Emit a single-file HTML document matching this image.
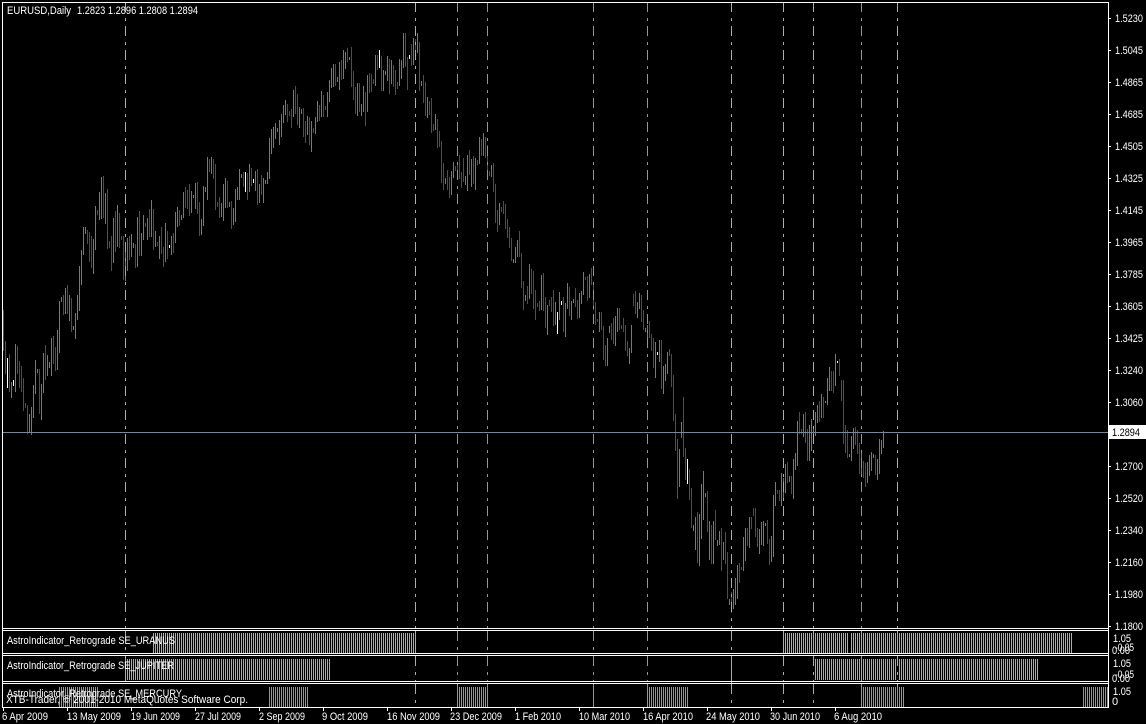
<!DOCTYPE html>
<html><head><meta charset="utf-8"><title>EURUSD,Daily</title>
<style>html,body{margin:0;padding:0;background:#000}svg{display:block}text{font-family:"Liberation Sans",sans-serif;font-size:11px;fill:#fff}</style>
</head><body>
<svg width="1146" height="724" viewBox="0 0 1146 724" xmlns="http://www.w3.org/2000/svg">
<rect width="1146" height="724" fill="#000"/>
<g shape-rendering="crispEdges" fill="none" transform="translate(.5 0)">
<path stroke="#DD1111" d="M3 310V351M5 341V374M9 354V392M17 346V374M19 361V388M21 366V392M23 378V411M25 403V408M27 405V434M39 369V414M45 345V380M53 336V364M55 347V371M63 295V315M67 285V314M71 298V332M87 230V244M89 232V262M91 236V268M97 210V215M103 176V218M107 189V249M109 241V248M111 236V271M115 211V252M119 213V248M121 236V240M123 236V280M129 236V260M135 244V268M139 211V256M145 223V227M149 209V237M153 209V250M157 242V246M161 227V254M163 247V267M167 231V259M173 233V253M179 210V226M185 187V208M187 190V209M189 184V216M197 182V214M199 202V236M209 159V172M213 159V179M215 164V210M217 202V207M219 197V218M227 181V208M231 201V229M243 172V187M247 173V200M251 168V186M257 169V205M261 175V195M287 104V122M289 111V116M291 109V128M295 86V114M297 94V125M303 108V137M305 121V143M309 117V145M313 128V133M319 105V121M323 95V117M325 106V110M335 64V86M341 60V80M347 48V62M351 47V87M353 71V100M355 87V114M359 83V112M365 92V126M369 73V93M371 74V92M373 79V84M377 55V70M381 56V91M389 59V94M393 65V87M395 70V95M397 82V89M405 33V67M407 57V90M411 44V66M415 39V60M419 42V91M423 75V103M425 82V116M429 101V115M431 98V133M433 124V131M437 119V148M439 131V147M441 141V183M443 163V190M447 170V190M449 177V198M455 166V171M457 163V180M459 155V179M461 172V188M463 158V182M469 150V175M473 156V184M477 160V165M481 139V156M485 137V158M487 145V177M489 171V176M493 163V192M495 184V223M497 210V232M501 207V212M503 201V214M505 204V229M507 219V238M509 227V248M511 238V261M519 231V257M521 253V288M523 281V310M527 286V304M531 269V294M533 271V309M535 290V320M537 303V307M539 301V311M543 273V311M545 297V328M549 300V306M551 297V312M553 290V326M563 297V332M569 287V316M575 288V307M577 300V319M585 277V280M587 276V301M591 268V285M593 282V310M595 302V325M597 319V322M601 312V330M603 326V360M605 345V366M611 323V340M613 318V344M619 308V330M621 325V329M623 318V332M625 325V351M627 341V356M633 294V306M635 291V314M641 295V322M643 310V330M649 321V338M651 334V351M653 338V368M661 340V389M669 349V356M671 354V387M673 375V421M675 414V451M677 439V499M683 397V457M685 448V480M689 469V500M691 488V528M697 512V563M707 491V532M711 525V564M715 510V540M721 528V571M725 532V564M727 552V599M731 592V613M739 563V583M741 567V570M747 528V546M751 517V529M753 508V516M755 508V537M757 528V547M767 520V544M769 539V565M777 490V494M779 490V501M787 462V483M791 476V494M799 412V434M801 429V434M805 412V443M807 429V461M819 401V422M823 397V418M831 371V391M833 371V393M839 359V376M841 380V401M843 380V444M845 425V453M847 430V458M855 427V445M857 430V454M859 443V474M863 461V478M865 463V487M875 455V475"/>
<path stroke="#3388DD" d="M11 382V398M15 344V392M29 414V432M31 407V435M33 385V418M35 360V394M37 369V373M41 384V420M43 353V393M47 355V376M49 362V368M51 338V376M57 330V370M59 301V353M61 297V302M65 288V314M69 295V321M73 326V330M75 313V339M77 295V320M79 266V311M81 250V285M83 227V255M85 227V234M93 239V274M95 206V250M99 192V220M101 177V219M105 193V224M113 218V263M117 205V247M125 243V281M127 238V271M131 234V257M133 243V248M137 217V267M141 233V256M143 215V240M147 218V240M151 200V237M155 231V247M159 236V259M165 223V262M171 236V255M175 212V243M177 207V227M181 215V220M183 192V218M191 191V213M193 195V198M195 183V209M201 219V235M203 186V226M205 187V192M207 157V200M211 157V174M221 203V217M223 184V221M225 178V208M229 202V207M233 208V225M235 189V222M237 187V200M239 169V200M241 174V178M249 164V192M255 171V191M259 184V203M263 178V203M265 180V184M267 172V184M269 138V179M271 129V154M273 127V148M275 123V139M277 128V132M279 120V145M281 114V137M283 105V123M285 100V115M293 90V117M299 107V128M301 109V114M307 116V135M311 121V152M315 117V134M317 101V122M321 91V117M327 92V117M329 80V102M331 68V88M333 64V87M337 77V82M339 62V90M343 50V79M345 52V69M349 57V60M357 83V116M361 104V116M363 86V112M367 75V112M375 55V86M383 70V91M385 71V75M387 56V81M391 60V84M399 59V86M401 60V79M403 33V68M413 38V65M417 33V53M421 81V86M427 97V118M435 114V130M445 178V184M451 171V195M453 162V178M465 176V185M467 155V191M471 159V187M475 158V190M479 137V164M483 133V156M491 165V177M499 203V225M513 259V263M515 247V263M517 240V257M525 295V301M529 264V299M541 275V310M547 305V335M555 302V325M559 292V320M565 303V337M567 283V309M571 301V320M573 299V303M579 293V318M581 291V304M583 272V295M589 274V298M599 312V332M607 338V366M609 326V333M615 316V346M617 308V332M629 348V364M631 325V353M637 302V318M639 293V309M645 328V332M647 325V348M655 342V378M659 340V362M663 366V394M665 364V381M667 352V374M679 449V487M681 422V438M693 525V531M695 517V550M699 514V566M701 484V539M703 471V520M705 493V497M709 521V560M713 521V564M717 540V546M719 531V545M723 542V560M729 599V605M733 589V609M735 578V605M737 565V599M743 537V571M745 528V561M749 517V548M759 529V554M761 522V545M763 521V546M765 523V526M771 536V562M773 495V557M775 482V506M781 473V506M783 478V500M785 464V493M789 476V482M793 459V499M795 453V470M797 421V466M803 414V437M809 425V461M811 419V451M813 426V444M815 412V436M817 405V423M821 394V418M825 401V403M827 378V405M829 367V391M835 354V386M849 454V457M851 436V461M853 428V449M861 452V477M867 462V483M869 455V476M871 452V471M873 454V458M877 459V480M879 439V474M881 440V454M883 431V448"/>
<path stroke="#FFFFFF" d="M7 358V388M13 380V386M169 245V248M245 172V192M253 179V183M379 50V68M409 55V59M557 312V334M561 301V305M657 352V355M687 459V484M837 361V363"/>
<path stroke="#FFA500" stroke-dasharray="10 6 3 5" d="M415 2V628M415 631V653M415 656V681M415 684V707M783 2V628M783 631V653M783 656V681M783 684V707"/>
<path stroke="#66CDAA" stroke-dasharray="10 6 3 5" d="M125 2V628M125 631V653M731 2V628M731 631V653M731 684V707M813 2V628M813 631V653M813 656V681M813 684V707M897 2V628M897 631V653M897 656V681M897 684V707"/>
<path stroke="#22E622" stroke-dasharray="10 6 3 5" d="M457 2V628M457 631V653M457 656V681M487 2V628M487 631V653M487 656V681M593 2V628M593 631V653M593 656V681M647 2V628M647 631V653M647 656V681M861 2V628M861 631V653M861 656V681"/>
<path stroke="#22E622" d="M457 684V707M487 684V707M593 684V707M647 684V707M861 684V707"/>
<path stroke="#66CDAA" d="M125 656V681M731 656V683"/>
</g>
<g shape-rendering="crispEdges" fill="none">
<path stroke="#FFA500" stroke-width="20" stroke-dasharray="1 1" d="M153 643H416M783 643H848M851 643H1072"/>
<path stroke="#66CDAA" stroke-width="21" stroke-dasharray="1 1" d="M127 669.5H331M815 669.5H896M899 669.5H1039"/>
<path stroke="#22E622" stroke-width="20" stroke-dasharray="1 1" d="M59 697H98M269 697H308M459 697H487M649 697H688M861 697H904M1083 697H1108"/>
<path stroke="#778899" d="M3 432.5H1108"/>
<path stroke="#fff" d="M2.5 2V708M2 2.5H1109M1108.5 2V708M2 628.5H1109M2 630.5H1109M2 653.5H1109M2 655.5H1109M2 681.5H1109M2 683.5H1109M2 707.5H1109"/>
<path stroke="#fff" d="M1109 18.5H1111M1109 50.5H1111M1109 82.5H1111M1109 114.5H1111M1109 146.5H1111M1109 178.5H1111M1109 210.5H1111M1109 242.5H1111M1109 274.5H1111M1109 306.5H1111M1109 338.5H1111M1109 370.5H1111M1109 402.5H1111M1109 466.5H1111M1109 498.5H1111M1109 530.5H1111M1109 562.5H1111M1109 594.5H1111M1109 626.5H1111"/>
<path stroke="#fff" d="M3.5 708V711M67.5 708V711M131.5 708V711M195.5 708V711M259.5 708V711M323.5 708V711M387.5 708V711M451.5 708V711M515.5 708V711M579.5 708V711M643.5 708V711M707.5 708V711M771.5 708V711M835.5 708V711"/>
<rect x="1109" y="425" width="37" height="14" fill="#fff"/>
</g>
<text x="7" y="14" textLength="64" lengthAdjust="spacingAndGlyphs">EURUSD,Daily</text>
<text x="77" y="14" textLength="121" lengthAdjust="spacingAndGlyphs">1.2823 1.2896 1.2808 1.2894</text>
<g>
<text x="1115" y="22" textLength="28" lengthAdjust="spacingAndGlyphs">1.5230</text>
<text x="1115" y="54" textLength="28" lengthAdjust="spacingAndGlyphs">1.5045</text>
<text x="1115" y="86" textLength="28" lengthAdjust="spacingAndGlyphs">1.4865</text>
<text x="1115" y="118" textLength="28" lengthAdjust="spacingAndGlyphs">1.4685</text>
<text x="1115" y="150" textLength="28" lengthAdjust="spacingAndGlyphs">1.4505</text>
<text x="1115" y="182" textLength="28" lengthAdjust="spacingAndGlyphs">1.4325</text>
<text x="1115" y="214" textLength="28" lengthAdjust="spacingAndGlyphs">1.4145</text>
<text x="1115" y="246" textLength="28" lengthAdjust="spacingAndGlyphs">1.3965</text>
<text x="1115" y="278" textLength="28" lengthAdjust="spacingAndGlyphs">1.3785</text>
<text x="1115" y="310" textLength="28" lengthAdjust="spacingAndGlyphs">1.3605</text>
<text x="1115" y="342" textLength="28" lengthAdjust="spacingAndGlyphs">1.3425</text>
<text x="1115" y="374" textLength="28" lengthAdjust="spacingAndGlyphs">1.3240</text>
<text x="1115" y="406" textLength="28" lengthAdjust="spacingAndGlyphs">1.3060</text>
<text x="1112" y="436" textLength="28" lengthAdjust="spacingAndGlyphs" style="fill:#000">1.2894</text>
<text x="1115" y="470" textLength="28" lengthAdjust="spacingAndGlyphs">1.2700</text>
<text x="1115" y="502" textLength="28" lengthAdjust="spacingAndGlyphs">1.2520</text>
<text x="1115" y="534" textLength="28" lengthAdjust="spacingAndGlyphs">1.2340</text>
<text x="1115" y="566" textLength="28" lengthAdjust="spacingAndGlyphs">1.2160</text>
<text x="1115" y="598" textLength="28" lengthAdjust="spacingAndGlyphs">1.1980</text>
<text x="1115" y="630" textLength="28" lengthAdjust="spacingAndGlyphs">1.1800</text>
</g>
<text x="1113" y="642" textLength="18" lengthAdjust="spacingAndGlyphs">1.05</text>
<text x="1115" y="651" textLength="19" lengthAdjust="spacingAndGlyphs">-0.05</text>
<text x="1112" y="654" textLength="18" lengthAdjust="spacingAndGlyphs">0.00</text>
<text x="1113" y="667" textLength="18" lengthAdjust="spacingAndGlyphs">1.05</text>
<text x="1115" y="678" textLength="19" lengthAdjust="spacingAndGlyphs">-0.05</text>
<text x="1112" y="682" textLength="18" lengthAdjust="spacingAndGlyphs">0.00</text>
<text x="1113" y="695" textLength="18" lengthAdjust="spacingAndGlyphs">1.05</text>
<text x="1112" y="705">0</text>
<text x="7" y="644" textLength="168" lengthAdjust="spacingAndGlyphs">AstroIndicator_Retrograde SE_URANUS</text>
<text x="7" y="669" textLength="167" lengthAdjust="spacingAndGlyphs">AstroIndicator_Retrograde SE_JUPITER</text>
<text x="7" y="697" textLength="175" lengthAdjust="spacingAndGlyphs">AstroIndicator_Retrograde SE_MERCURY</text>
<text x="6" y="703" textLength="242" lengthAdjust="spacingAndGlyphs">XTB-Trader, © 2001-2010 MetaQuotes Software Corp.</text>
<g>
<text x="2" y="720" textLength="46" lengthAdjust="spacingAndGlyphs">6 Apr 2009</text>
<text x="67" y="720" textLength="54" lengthAdjust="spacingAndGlyphs">13 May 2009</text>
<text x="131" y="720" textLength="49" lengthAdjust="spacingAndGlyphs">19 Jun 2009</text>
<text x="195" y="720" textLength="46" lengthAdjust="spacingAndGlyphs">27 Jul 2009</text>
<text x="259" y="720" textLength="46" lengthAdjust="spacingAndGlyphs">2 Sep 2009</text>
<text x="322" y="720" textLength="46" lengthAdjust="spacingAndGlyphs">9 Oct 2009</text>
<text x="387" y="720" textLength="53" lengthAdjust="spacingAndGlyphs">16 Nov 2009</text>
<text x="450" y="720" textLength="52" lengthAdjust="spacingAndGlyphs">23 Dec 2009</text>
<text x="515" y="720" textLength="46" lengthAdjust="spacingAndGlyphs">1 Feb 2010</text>
<text x="579" y="720" textLength="51" lengthAdjust="spacingAndGlyphs">10 Mar 2010</text>
<text x="643" y="720" textLength="50" lengthAdjust="spacingAndGlyphs">16 Apr 2010</text>
<text x="706" y="720" textLength="54" lengthAdjust="spacingAndGlyphs">24 May 2010</text>
<text x="770" y="720" textLength="50" lengthAdjust="spacingAndGlyphs">30 Jun 2010</text>
<text x="834" y="720" textLength="48" lengthAdjust="spacingAndGlyphs">6 Aug 2010</text>
</g>
</svg>
</body></html>
